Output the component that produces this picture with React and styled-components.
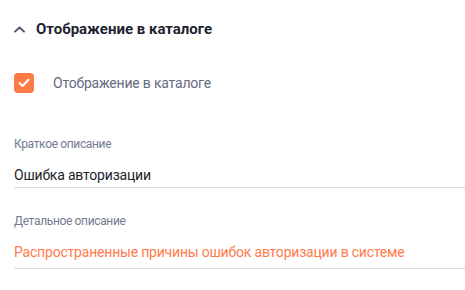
import React from "react";
import styled, { createGlobalStyle } from "styled-components";

const GlobalStyle = createGlobalStyle`
  body {
    margin: 0;
    background: #ffffff;
    font-family: Roboto, "Noto Sans", sans-serif;
  }
`;

const Panel = styled.div`
  width: 465px;
  height: 290px;
  padding: 19px 0 0 14px;
  box-sizing: border-box;
  overflow: hidden;
`;

const Header = styled.div`
  display: flex;
  align-items: center;
  gap: 11px;
  height: 20px;
`;

const Title = styled.h2`
  margin: 0;
  font-size: 15px;
  font-weight: 700;
  color: #1e2330;
`;

const CheckRow = styled.label`
  display: flex;
  align-items: center;
  gap: 19px;
  margin-top: 34px;
  height: 20px;
`;

const Box = styled.span`
  width: 20px;
  height: 20px;
  border-radius: 4px;
  background: ${(p) => (p.checked ? "#ff7a45" : "#fff")};
  display: flex;
  align-items: center;
  justify-content: center;
`;

const CheckLabel = styled.span`
  font-size: 14px;
  letter-spacing: -0.2px;
  color: #646c7d;
`;

const Field = styled.div`
  margin-top: ${(p) => p.top}px;
  display: flex;
  flex-direction: column;
`;

const FieldLabel = styled.div`
  font-size: 12px;
  line-height: 14px;
  letter-spacing: -0.35px;
  color: #737b8c;
`;

const FieldValue = styled.div`
  margin-top: 15px;
  font-size: 14px;
  line-height: 18px;
  letter-spacing: -0.2px;
  padding-bottom: ${(p) => p.pad}px;
  color: ${(p) => (p.accent ? "#ff7a4d" : "#1b1f2b")};
  border-bottom: 1px solid #dadde5;
`;

function Chevron() {
  return (
    <svg width="11" height="7" viewBox="0 0 11 7" fill="none">
      <path d="M1 5.6L5.5 1.4L10 5.6" stroke="#4a5163" strokeWidth="1.9" strokeLinecap="round" strokeLinejoin="round" />
    </svg>
  );
}

function Tick() {
  return (
    <svg width="12" height="10" viewBox="0 0 12 10" fill="none">
      <path d="M1.5 5L4.5 8L10.5 1.8" stroke="#fff" strokeWidth="2" strokeLinecap="round" strokeLinejoin="round" />
    </svg>
  );
}

export default function App() {
  return (
    <>
      <GlobalStyle />
      <Panel>
        <Header>
          <Chevron />
          <Title>Отображение в каталоге</Title>
        </Header>
        <CheckRow>
          <Box checked>
            <Tick />
          </Box>
          <CheckLabel>Отображение в каталоге</CheckLabel>
        </CheckRow>
        <Field top={44}>
          <FieldLabel>Краткое описание</FieldLabel>
          <FieldValue pad={3}>Ошибка авторизации</FieldValue>
        </Field>
        <Field top={26}>
          <FieldLabel>Детальное описание</FieldLabel>
          <FieldValue pad={7} accent>
            Распространенные причины ошибок авторизации в системе
          </FieldValue>
        </Field>
      </Panel>
    </>
  );
}
